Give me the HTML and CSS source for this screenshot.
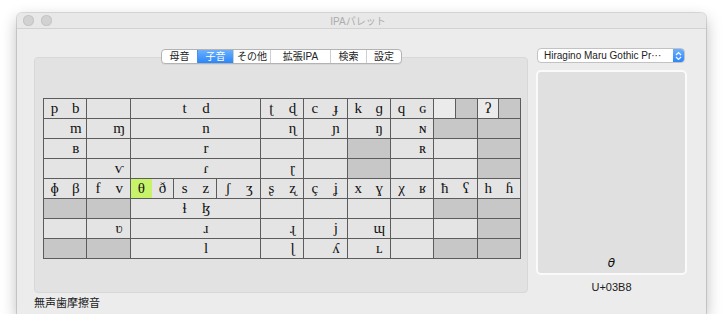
FILE: index.html
```html
<!DOCTYPE html>
<html lang="ja">
<head>
    <meta charset="UTF-8">
    <title>IPAパレット</title>
    <link rel="stylesheet" href="styles.css">
</head>
<body>
    <div class="window">
        <div class="titlebar">
            <div class="lights">
                <span class="light"></span>
                <span class="light"></span>
            </div>
            <div class="title">IPAパレット</div>
        </div>

        <div class="content">
            <div class="left">
                <div class="tabs">
                    <span class="tab t1">母音</span>
                    <span class="tab t2 active">子音</span>
                    <span class="tab t3">その他</span>
                    <span class="tab t4">拡張IPA</span>
                    <span class="tab t5">検索</span>
                    <span class="tab t6">設定</span>
                </div>
                <div class="panel">
                    <div class="chart">
                        <!-- plosive -->
                        <div class="c"><span>p</span><span>b</span></div>
                        <div class="c"><span></span><span></span></div>
                        <div class="c w6"><span></span><span></span><span>t</span><span>d</span><span></span><span></span></div>
                        <div class="c"><span>ʈ</span><span>ɖ</span></div>
                        <div class="c"><span>c</span><span>ɟ</span></div>
                        <div class="c"><span>k</span><span>ɡ</span></div>
                        <div class="c"><span>q</span><span>ɢ</span></div>
                        <div class="c s1 lite"><span></span></div>
                        <div class="c s1 x"><span></span></div>
                        <div class="c s1 lite"><span>ʔ</span></div>
                        <div class="c s1 x"><span></span></div>
                        <!-- nasal -->
                        <div class="c"><span></span><span>m</span></div>
                        <div class="c"><span></span><span>ɱ</span></div>
                        <div class="c w6"><span></span><span></span><span></span><span>n</span><span></span><span></span></div>
                        <div class="c"><span></span><span>ɳ</span></div>
                        <div class="c"><span></span><span>ɲ</span></div>
                        <div class="c"><span></span><span>ŋ</span></div>
                        <div class="c"><span></span><span>ɴ</span></div>
                        <div class="c x"></div>
                        <div class="c x"></div>
                        <!-- trill -->
                        <div class="c"><span></span><span>ʙ</span></div>
                        <div class="c"></div>
                        <div class="c w6"><span></span><span></span><span></span><span>r</span><span></span><span></span></div>
                        <div class="c"></div>
                        <div class="c"></div>
                        <div class="c x"></div>
                        <div class="c"><span></span><span>ʀ</span></div>
                        <div class="c"></div>
                        <div class="c x"></div>
                        <!-- tap / flap -->
                        <div class="c"></div>
                        <div class="c"><span></span><span>ⱱ</span></div>
                        <div class="c w6"><span></span><span></span><span></span><span>ɾ</span><span></span><span></span></div>
                        <div class="c"><span></span><span>ɽ</span></div>
                        <div class="c"></div>
                        <div class="c x"></div>
                        <div class="c"></div>
                        <div class="c"></div>
                        <div class="c x"></div>
                        <!-- fricative -->
                        <div class="c"><span>ɸ</span><span>β</span></div>
                        <div class="c"><span>f</span><span>v</span></div>
                        <div class="c"><span class="sel">θ</span><span>ð</span></div>
                        <div class="c"><span>s</span><span>z</span></div>
                        <div class="c"><span>ʃ</span><span>ʒ</span></div>
                        <div class="c"><span>ʂ</span><span>ʐ</span></div>
                        <div class="c"><span>ç</span><span>ʝ</span></div>
                        <div class="c"><span>x</span><span>ɣ</span></div>
                        <div class="c"><span>χ</span><span>ʁ</span></div>
                        <div class="c"><span>ħ</span><span>ʕ</span></div>
                        <div class="c"><span>h</span><span>ɦ</span></div>
                        <!-- lateral fricative -->
                        <div class="c x"></div>
                        <div class="c x"></div>
                        <div class="c w6"><span></span><span></span><span>ɬ</span><span>ɮ</span><span></span><span></span></div>
                        <div class="c"></div>
                        <div class="c"></div>
                        <div class="c"></div>
                        <div class="c"></div>
                        <div class="c x"></div>
                        <div class="c x"></div>
                        <!-- approximant -->
                        <div class="c"></div>
                        <div class="c"><span></span><span>ʋ</span></div>
                        <div class="c w6"><span></span><span></span><span></span><span>ɹ</span><span></span><span></span></div>
                        <div class="c"><span></span><span>ɻ</span></div>
                        <div class="c"><span></span><span>j</span></div>
                        <div class="c"><span></span><span>ɰ</span></div>
                        <div class="c"></div>
                        <div class="c"></div>
                        <div class="c x"></div>
                        <!-- lateral approximant -->
                        <div class="c x"></div>
                        <div class="c x"></div>
                        <div class="c w6"><span></span><span></span><span></span><span>l</span><span></span><span></span></div>
                        <div class="c"><span></span><span>ɭ</span></div>
                        <div class="c"><span></span><span>ʎ</span></div>
                        <div class="c"><span></span><span>ʟ</span></div>
                        <div class="c"></div>
                        <div class="c x"></div>
                        <div class="c x"></div>
                    </div>
                </div>
                <div class="status">無声歯摩擦音</div>
            </div>

            <div class="right">
                <div class="popup">
                    <span class="popup-text">Hiragino Maru Gothic Pr···</span>
                    <span class="stepper">
                        <svg width="7" height="10" viewBox="0 0 7 10">
                            <path d="M1 4 L3.5 1.5 L6 4 M1 6 L3.5 8.5 L6 6" fill="none" stroke="#fff" stroke-width="1.1"/>
                        </svg>
                    </span>
                </div>
                <div class="preview">
                    <span class="glyph">θ</span>
                </div>
                <div class="code">U+03B8</div>
            </div>
        </div>
    </div>
</body>
</html>
```

FILE: styles.css
```css
body {
    margin: 0;
    padding: 13px 0 0 17px;
    background: #fff;
    font-family: "Liberation Sans", "Noto Sans CJK JP", sans-serif;
}
.window {
    width: 689px;
    height: 301px;
    background: #ececec;
    border-radius: 5px 5px 0 0;
    box-shadow: 0 0 0 1px rgba(0, 0, 0, 0.12), 0 6px 16px rgba(0, 0, 0, 0.28);
    overflow: hidden;
}
.titlebar {
    height: 15px;
    background: #e8e8e8;
    border-bottom: 1px solid #d2d2d2;
    display: flex;
    align-items: center;
}
.lights {
    display: flex;
    gap: 7px;
    padding-left: 6px;
}
.light {
    width: 11px;
    height: 11px;
    border-radius: 50%;
    background: #d2d2d2;
    box-shadow: inset 0 0 0 1px #c6c6c6;
}
.title {
    flex: 1;
    text-align: center;
    font-size: 10px;
    color: #acacac;
    margin-left: -42px;
}
.content {
    display: flex;
    gap: 8px;
    padding: 20px 19px 0 17px;
}
.left {
    width: 494px;
    display: flex;
    flex-direction: column;
}
.tabs {
    align-self: center;
    display: flex;
    height: 13px;
    margin-bottom: -7px;
    margin-left: 1px;
    position: relative;
    z-index: 1;
    background: #fff;
    border: 1px solid #b3b3b3;
    border-radius: 4px;
    overflow: hidden;
    box-shadow: 0 1px 0 rgba(0, 0, 0, 0.05);
}
.tab {
    font-size: 10px;
    line-height: 13px;
    text-align: center;
    color: #222;
    border-left: 1px solid #cfcfcf;
}
.tab:first-child {
    border-left: none;
}
.t1 { width: 35px; }
.t2 { width: 35px; }
.t3 { width: 36px; }
.t4 { width: 59px; }
.t5 { width: 35px; }
.t6 { width: 34px; }
.tab.active {
    background: linear-gradient(#6db0fb, #2a86f9);
    color: #fff;
    border-left-color: #4a8fe8;
}
.panel {
    height: 194px;
    background: #e2e2e2;
    border: 1px solid #d8d8d8;
    border-radius: 4px;
    display: flex;
    justify-content: center;
    align-items: flex-start;
    padding-top: 40px;
}
.chart {
    width: 476px;
    margin-left: 2px;
    display: grid;
    grid-template-columns: repeat(22, 1fr);
    grid-template-rows: repeat(8, 19px);
    gap: 1px;
    padding: 1px;
    background: #5c5c5c;
    font-family: "Liberation Serif", "DejaVu Serif", serif;
    font-size: 15px;
    color: #111;
}
.c {
    grid-column: span 2;
    display: grid;
    grid-template-columns: repeat(2, 1fr);
    background: #e4e4e4;
}
.c span {
    display: flex;
    align-items: center;
    justify-content: center;
    line-height: 19px;
}
.c.w6 {
    grid-column: span 6;
    grid-template-columns: repeat(6, 1fr);
}
.c.s1 {
    grid-column: span 1;
    grid-template-columns: 1fr;
}
.c.x {
    background: #c7c7c7;
}
.c.lite {
    background: #ebebeb;
}
.c span.sel {
    background: #c8f26a;
}
.status {
    margin-top: 3px;
    font-size: 11px;
    line-height: 14px;
    color: #1a1a1a;
}
.right {
    width: 151px;
    display: flex;
    flex-direction: column;
    margin-top: -1px;
}
.popup {
    margin-left: 1px;
    width: 146px;
    height: 13px;
    display: flex;
    align-items: center;
    background: #fff;
    border: 1px solid #c2c2c2;
    border-radius: 4px;
    overflow: hidden;
}
.popup-text {
    flex: 1;
    font-size: 10px;
    color: #222;
    padding-left: 6px;
    white-space: nowrap;
}
.stepper {
    width: 11px;
    height: 13px;
    display: flex;
    align-items: center;
    justify-content: center;
    background: linear-gradient(#6db0fb, #2a86f9);
}
.preview {
    margin-top: 7px;
    height: 201px;
    background: #e0e0e0;
    border: 2px solid #fafafa;
    border-radius: 5px;
    display: flex;
    align-items: flex-end;
    justify-content: center;
}
.glyph {
    font-family: "DejaVu Sans", sans-serif;
    font-style: italic;
    font-size: 12px;
    line-height: 14px;
    padding-bottom: 3px;
    color: #111;
}
.code {
    margin-top: 5px;
    text-align: center;
    font-size: 11px;
    line-height: 14px;
    color: #1a1a1a;
}
```
